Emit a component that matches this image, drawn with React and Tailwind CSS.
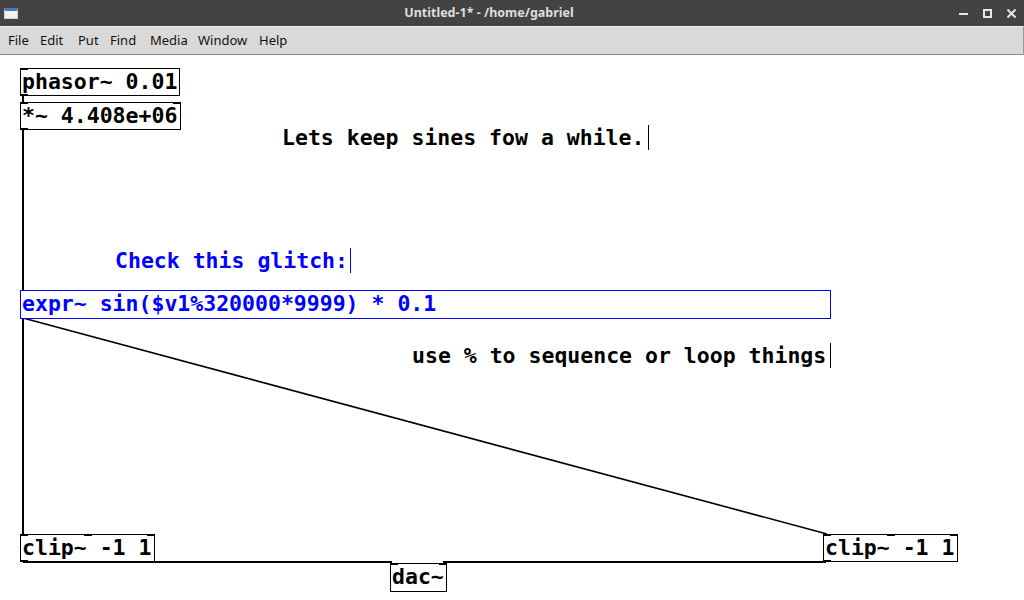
import React from "react";

const mono = { fontFamily: '"DejaVu Sans Mono", "Liberation Mono", monospace' };

function Box({ left, top, w, h = 28, text, blue = false, inlets = [0], outlets = [0] }) {
  const color = blue ? "border-[#0000ff] text-[#0000ff]" : "border-black text-black";
  return (
    <div
      className={`absolute border bg-white ${color}`}
      style={{ left, top, width: w, height: h }}
    >
      <div className="pl-[1px] text-[21.5px] font-bold leading-[26px] whitespace-pre" style={mono}>
        {text}
      </div>
      {inlets.map((x, i) => (
        <div key={"i" + i} className="absolute top-[-1px] h-[2px] w-[8px] bg-black" style={{ left: x - 1 }} />
      ))}
      {outlets.map((x, i) => (
        <div key={"o" + i} className="absolute bottom-[-1px] h-[2px] w-[8px] bg-black" style={{ left: x - 1 }} />
      ))}
    </div>
  );
}

function Comment({ left, top, text, marker, blue = false }) {
  return (
    <>
      <div
        className={`absolute text-[21.5px] font-bold leading-[26px] whitespace-pre ${blue ? "text-[#0000ff]" : "text-black"}`}
        style={{ ...mono, left, top }}
      >
        {text}
      </div>
      <div
        className={`absolute w-px h-[25px] ${blue ? "bg-[#0000ff]" : "bg-black"}`}
        style={{ left: marker, top: top }}
      />
    </>
  );
}

export default function App() {
  const menus = [
    ["File", "w-[32px]"],
    ["Edit", "w-[38px]"],
    ["Put", "w-[32px]"],
    ["Find", "w-[40px]"],
    ["Media", "w-[48px]"],
    ["Window", "w-[61px]"],
    ["Help", "w-[40px]"],
  ];
  return (
    <div className="w-[1024px] h-[600px] overflow-hidden bg-white flex flex-col" style={{ fontFamily: '"Noto Sans", "DejaVu Sans", sans-serif' }}>
      {/* Title bar */}
      <div className="h-[26px] bg-[#434343] flex items-center shrink-0">
        <div className="w-[24px] pl-[4px] flex items-center">
          <div className="w-[14px] h-[11px] bg-[#f2f2f2] border border-[#cfcfcf] border-t-[3px] border-t-[#4a78c0]" />
        </div>
        <div className="flex-1 text-center text-[12.5px] font-bold text-[#dedede] pt-[1px]">
          Untitled-1* - /home/gabriel
        </div>
        <div className="w-[70px] flex items-center gap-[15px] pr-[8px] justify-end">
          <svg width="9" height="9" viewBox="0 0 9 9"><rect x="0" y="4" width="9" height="2" fill="#e6e6e6" /></svg>
          <svg width="9" height="9" viewBox="0 0 9 9"><rect x="1" y="1" width="7" height="7" fill="none" stroke="#e6e6e6" strokeWidth="2" /></svg>
          <svg width="9" height="9" viewBox="0 0 9 9"><path d="M0.5 0.5 L8.5 8.5 M8.5 0.5 L0.5 8.5" stroke="#e6e6e6" strokeWidth="2" /></svg>
        </div>
      </div>
      {/* Menu bar */}
      <div className="h-[29px] bg-[#d9d9d9] border-b border-[#8c8c8c] border-r border-r-[#9a9a9a] border-t border-t-[#eeeeee] flex items-center pl-[8px] shrink-0 text-[13px] text-[#111]">
        {menus.map(([m, w]) => (
          <div key={m} className={w}>{m}</div>
        ))}
      </div>
      {/* Canvas */}
      <div className="relative flex-1 bg-white">
        <svg className="absolute inset-0" width="1024" height="545">
          <g stroke="#000" strokeWidth="2" fill="none">
            <line x1="23" y1="41" x2="23" y2="47" />
            <line x1="23" y1="75" x2="23" y2="235" />
            <line x1="23" y1="264" x2="23" y2="479" />
            <line x1="23" y1="507" x2="392" y2="507" />
            <line x1="826" y1="507" x2="443" y2="507" />
          </g>
          <line x1="23" y1="263" x2="827" y2="479" stroke="#000" strokeWidth="1.6" />
        </svg>

        <Box left={20} top={13} w={160} text="phasor~ 0.01" />
        <Box left={20} top={47} w={161} text="*~ 4.408e+06" inlets={[0, 153]} />
        <Comment left={282} top={70} text="Lets keep sines fow a while." marker={648} />
        <Comment left={115} top={193} text="Check this glitch:" marker={350} blue />
        <Box left={20} top={235} w={811} h={29} text="expr~ sin($v1%320000*9999) * 0.1" blue inlets={[]} outlets={[]} />
        <Comment left={412} top={288} text="use % to sequence or loop things" marker={830} />
        <Box left={20} top={479} w={135} text="clip~ -1 1" inlets={[0, 64, 127]} />
        <Box left={823} top={479} w={135} text="clip~ -1 1" inlets={[0, 64, 127]} />
        <Box left={390} top={508} w={57} h={29} text="dac~" inlets={[0, 49]} outlets={[]} />
      </div>
    </div>
  );
}
